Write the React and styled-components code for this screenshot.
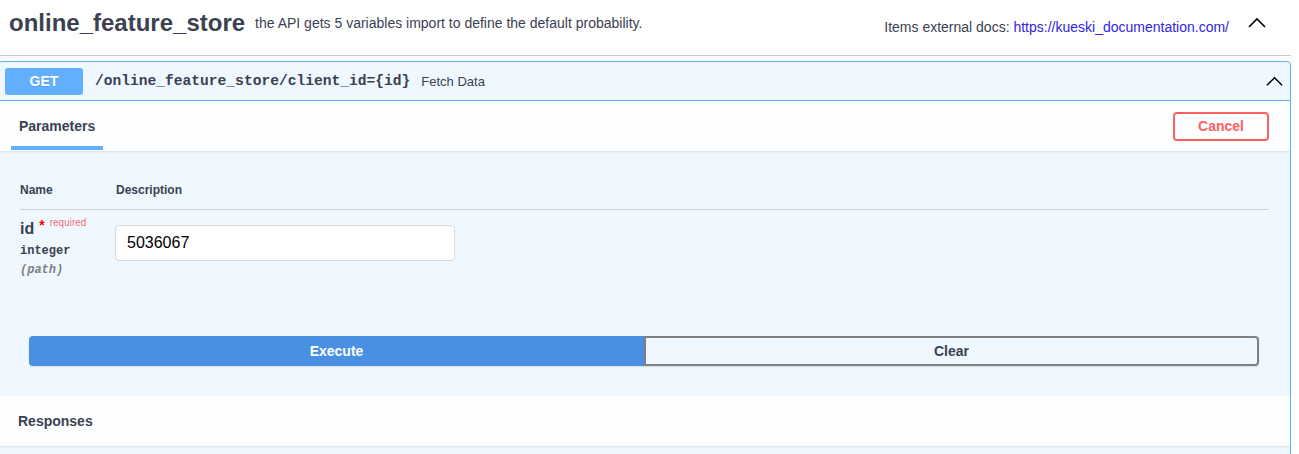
import React from "react";
import styled, { createGlobalStyle } from "styled-components";

const GlobalStyle = createGlobalStyle`
  body {
    margin: 0;
    background: #fff;
    font-family: "Liberation Sans", Arial, sans-serif;
    color: #3b4151;
  }
`;

const Page = styled.div`
  width: 1293px;
  margin-left: -2px;
`;

const TagHeader = styled.div`
  display: flex;
  align-items: center;
  height: 56px;
  box-sizing: border-box;
  padding: 0 24px 9px 11px;
  border-bottom: 1px solid #c9cbd0;
`;

const TagTitle = styled.h3`
  margin: 0;
  font-size: 24px;
  font-weight: 700;
  color: #3b4151;
`;

const TagDesc = styled.span`
  margin-left: 10px;
  font-size: 14px;
  color: #3b4151;
  flex: 1;
`;

const Docs = styled.div`
  font-size: 14px;
  color: #3b4151;
  margin-top: 8px;
  margin-right: 18px;
  a {
    color: #2f25e0;
    text-decoration: none;
  }
`;

const Chevron = ({ size = 20 }) => (
  <svg width={size} height={size} viewBox="0 0 20 20">
    <path d="M2 14 L10 6 L18 14" fill="none" stroke="#000" strokeWidth="1.6" />
  </svg>
);

const OpBlock = styled.div`
  margin-top: 5px;
  border: 1px solid #61affe;
  border-radius: 4px;
  background: #eff7ff;
  overflow: hidden;
`;

const Summary = styled.div`
  display: flex;
  align-items: center;
  height: 38px;
  padding: 0 6px;
  border-bottom: 1px solid #61affe;
`;

const Method = styled.span`
  width: 78px;
  height: 27px;
  border-radius: 3px;
  background: #61affe;
  color: #fff;
  font-weight: 700;
  font-size: 14px;
  display: flex;
  align-items: center;
  justify-content: center;
  text-shadow: 0 1px 0 rgba(0, 0, 0, 0.1);
`;

const Path = styled.span`
  margin-left: 12px;
  font-family: "Liberation Mono", monospace;
  font-weight: 700;
  font-size: 14.6px;
  color: #3b4151;
`;

const PathDesc = styled.span`
  margin-left: 11px;
  font-size: 13px;
  color: #3b4151;
  flex: 1;
`;

const SectionHeader = styled.div`
  display: flex;
  align-items: center;
  justify-content: space-between;
  height: 50px;
  padding: 0 21px 0 12px;
  background: rgba(255, 255, 255, 0.8);
  box-shadow: 0 1px 2px rgba(0, 0, 0, 0.1);
`;

const Tab = styled.div`
  position: relative;
  align-self: stretch;
  display: flex;
  align-items: center;
  padding: 0 8px;
  font-size: 14px;
  font-weight: 700;
  &::after {
    content: "";
    position: absolute;
    left: 0;
    right: 0;
    bottom: 1px;
    height: 4px;
    background: #61affe;
  }
`;

const Title = styled.h4`
  margin: 0;
  font-size: 14px;
  font-weight: 700;
  color: #3b4151;
  padding-left: 7px;
`;

const CancelButton = styled.button`
  width: 96px;
  height: 29px;
  border: 2px solid #ff6060;
  border-radius: 4px;
  background: transparent;
  color: #ff6060;
  font-family: inherit;
  font-size: 14px;
  font-weight: 700;
`;

const Params = styled.div`
  padding: 31px 21px 0 21px;
`;

const TableHead = styled.div`
  display: grid;
  grid-template-columns: 96px 1fr;
  font-size: 12px;
  font-weight: 700;
  height: 28px;
  border-bottom: 1px solid rgba(59, 65, 81, 0.2);
  box-sizing: border-box;
  padding-top: 1px;
`;

const Row = styled.div`
  display: grid;
  grid-template-columns: 96px 1fr;
  padding-top: 9px;
  height: 70px;
`;

const ParamName = styled.div`
  font-size: 16px;
  font-weight: 700;
  span {
    color: red;
    font-size: 14px;
    position: relative;
    top: -4px;
    margin-left: 5px;
  }
  sup {
    font-size: 10px;
    font-weight: 400;
    color: rgba(255, 0, 0, 0.6);
    margin-left: 5px;
    position: relative;
    top: -2px;
  }
`;

const ParamType = styled.div`
  font-family: "Liberation Mono", monospace;
  font-size: 12px;
  font-weight: 700;
  margin-top: 6px;
`;

const ParamIn = styled.div`
  font-family: "Liberation Mono", monospace;
  font-size: 12px;
  font-style: italic;
  font-weight: 700;
  color: #808080;
  margin-top: 5px;
`;

const Input = styled.input`
  width: 340px;
  height: 36px;
  box-sizing: border-box;
  margin-top: 6px;
  margin-left: -1px;
  border: 1px solid #d9d9d9;
  border-radius: 4px;
  background: #fff;
  padding: 0 11px;
  font-family: inherit;
  font-size: 16px;
  color: #000;
  outline: none;
`;

const Actions = styled.div`
  display: grid;
  grid-template-columns: 1fr 1fr;
  padding: 47px 31px 30px 30px;
`;

const ActionButton = styled.button`
  height: 30px;
  font-family: inherit;
  font-size: 14px;
  font-weight: 700;
  border-radius: ${(p) => (p.primary ? "4px 0 0 4px" : "0 4px 4px 0")};
  border: ${(p) => (p.primary ? "2px solid #4990e2" : "2px solid #808080")};
  background: ${(p) => (p.primary ? "#4990e2" : "transparent")};
  color: ${(p) => (p.primary ? "#fff" : "#3b4151")};
  box-shadow: 0 1px 2px rgba(0, 0, 0, 0.1);
`;

const Tail = styled.div`
  height: 20px;
`;

export default function App() {
  return (
    <Page>
      <GlobalStyle />
      <TagHeader>
        <TagTitle>online_feature_store</TagTitle>
        <TagDesc>the API gets 5 variables import to define the default probability.</TagDesc>
        <Docs>
          Items external docs: <a href="#">https://kueski_documentation.com/</a>
        </Docs>
        <Chevron />
      </TagHeader>
      <OpBlock>
        <Summary>
          <Method>GET</Method>
          <Path>/online_feature_store/client_id=&#123;id&#125;</Path>
          <PathDesc>Fetch Data</PathDesc>
          <Chevron size={19} />
        </Summary>
        <SectionHeader>
          <Tab>Parameters</Tab>
          <CancelButton>Cancel</CancelButton>
        </SectionHeader>
        <Params>
          <TableHead>
            <div>Name</div>
            <div>Description</div>
          </TableHead>
          <Row>
            <div>
              <ParamName>
                id<span>*</span>
                <sup>required</sup>
              </ParamName>
              <ParamType>integer</ParamType>
              <ParamIn>(path)</ParamIn>
            </div>
            <div>
              <Input defaultValue="5036067" />
            </div>
          </Row>
        </Params>
        <Actions>
          <ActionButton primary>Execute</ActionButton>
          <ActionButton>Clear</ActionButton>
        </Actions>
        <SectionHeader>
          <Title>Responses</Title>
        </SectionHeader>
        <Tail />
      </OpBlock>
    </Page>
  );
}
